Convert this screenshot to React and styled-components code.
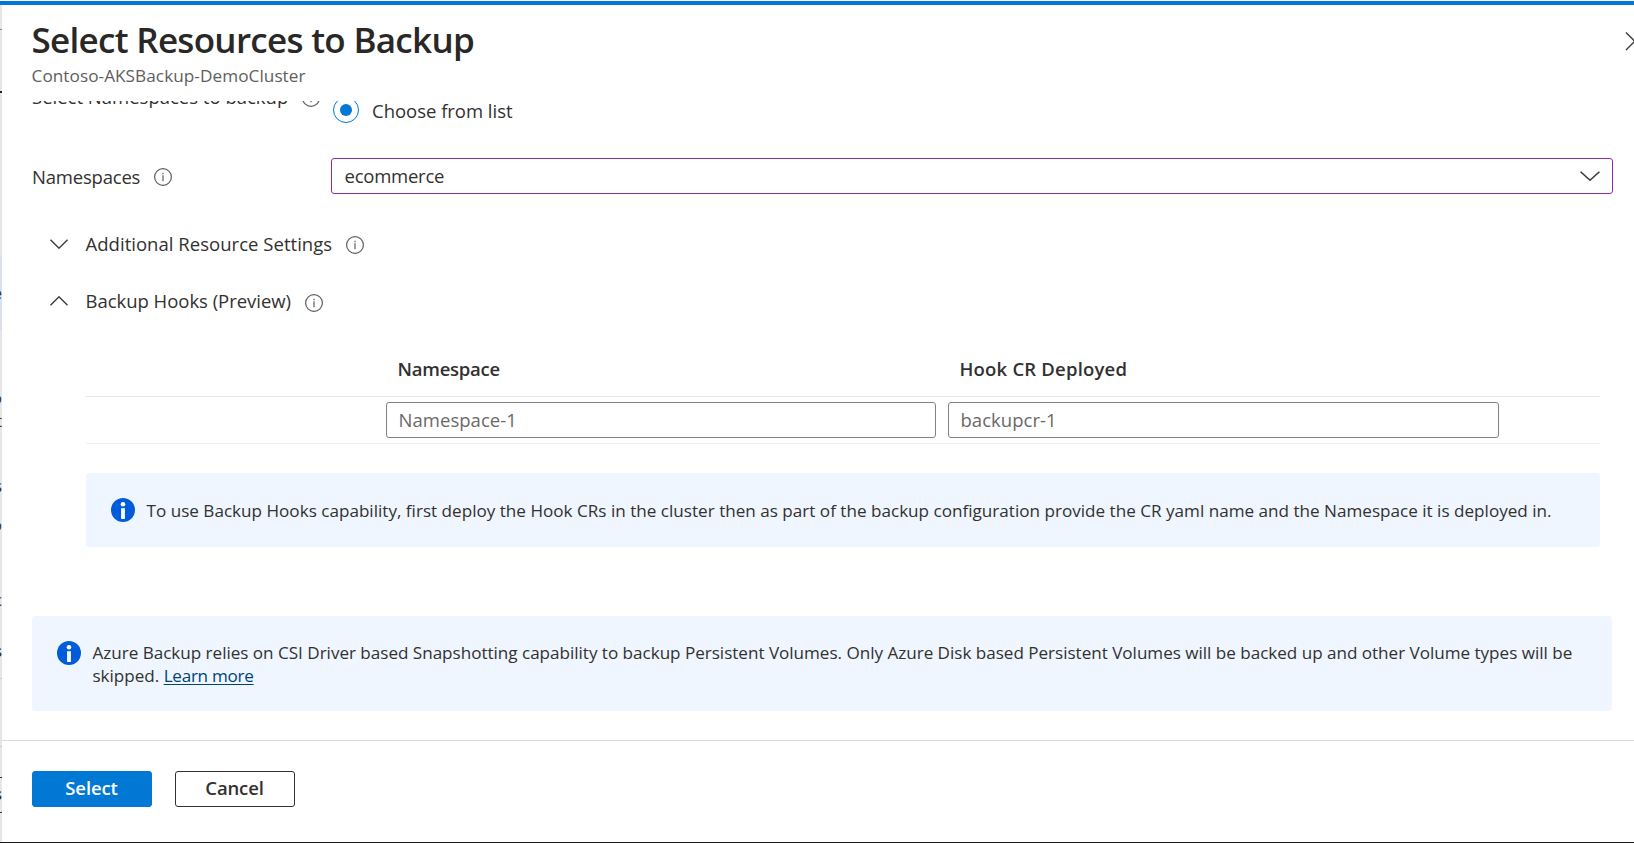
import React from "react";
import styled, { createGlobalStyle } from "styled-components";

const GlobalStyle = createGlobalStyle`
  * { box-sizing: border-box; }
  body {
    margin: 0;
    background: #fff;
    color: #323130;
    font-family: "Open Sans", "Noto Sans", sans-serif;
    font-size: 18.5px;
    line-height: 26px;
  }
`;

const Screen = styled.div`
  display: flex;
  flex-direction: column;
  height: 843px;
  overflow: hidden;
  border-bottom: 1px solid #1b1b1b;
`;

const TopBar = styled.div`
  flex: none;
  height: 5px;
  border-top: 1px solid #fff;
  background: #0078d4;
`;

const Workspace = styled.div`
  flex: 1;
  display: flex;
  min-height: 0;
`;

const Backdrop = styled.div`
  flex: none;
  display: flex;
  flex-direction: column;
  width: 2px;
  overflow: hidden;
  background: #e6e6e6;
`;

const Mark = styled.div`
  flex: none;
  height: ${(p) => p.$height}px;
  margin-top: ${(p) => p.$gap}px;
  background: ${(p) => p.$color || "transparent"};
`;

const Sliver = styled(Mark)`
  display: flex;
  justify-content: flex-end;
  overflow: hidden;
  font-size: 17px;
  font-weight: ${(p) => (p.$bold ? 600 : 400)};
  line-height: ${(p) => p.$height}px;
`;

const Panel = styled.main`
  flex: 1;
  display: flex;
  flex-direction: column;
  min-width: 0;
  background: #fff;
`;

const Header = styled.header`
  flex: none;
  display: flex;
  justify-content: space-between;
  height: 96px;
  padding: 15px 0 0 29.5px;
`;

const Title = styled.h1`
  margin: 0;
  color: #292827;
  font-size: 35px;
  font-weight: 600;
  line-height: 40px;
  letter-spacing: -0.7px;
`;

const Subtitle = styled.div`
  margin-top: 4px;
  color: #605e5c;
  font-size: 17.2px;
  line-height: 24px;
  letter-spacing: 0.05px;
`;

const CloseButton = styled.button`
  flex: none;
  display: flex;
  width: 9px;
  height: 20px;
  margin-top: 11px;
  padding: 0;
  border: 0;
  background: none;
  overflow: hidden;
`;

const Body = styled.div`
  flex: 1;
  min-height: 0;
  padding: 0 21px 0 30px;
  overflow: hidden;
`;

const Field = styled.div`
  display: flex;
  align-items: ${(p) => (p.$top ? "flex-start" : "center")};
  margin-top: ${(p) => p.$gap}px;
`;

const Label = styled.div`
  flex: none;
  display: flex;
  align-items: center;
  gap: 14px;
  width: 299px;
  white-space: nowrap;
`;

const Text = styled.span`
  padding-top: ${(p) => p.$drop || 0}px;
  letter-spacing: ${(p) => p.$track || 0}px;
`;

const RadioOption = styled.div`
  display: flex;
  align-items: center;
  gap: 13px;
  height: 39px;
  padding: 13px 0 0 2px;
`;

const RadioCircle = styled.span`
  display: flex;
  align-items: center;
  justify-content: center;
  width: 26px;
  height: 26px;
  border: 1px solid #0078d4;
  border-radius: 50%;

  &::after {
    content: "";
    width: 12px;
    height: 12px;
    border-radius: 50%;
    background: #0078d4;
  }
`;

const Dropdown = styled.div`
  flex: 1;
  display: flex;
  align-items: center;
  justify-content: space-between;
  height: 36px;
  padding: 0 12px 0 12.5px;
  border: 1px solid #8a2da5;
  border-radius: 3px;
`;

const Disclosure = styled.div`
  display: flex;
  align-items: center;
  height: 26px;
  margin: ${(p) => p.$gap}px 0 0 18px;
`;

const DisclosureTitle = styled.div`
  display: flex;
  align-items: center;
  gap: 14px;
  margin-left: 17.5px;
`;

const Section = styled.section`
  margin: 42px 13px 0 54px;
`;

const HookRow = styled.div`
  display: grid;
  grid-template-columns: 550px 551px;
  column-gap: 12px;
  padding: ${(p) => (p.$head ? "0 0 14px 300px" : "5px 0 5px 300px")};
  border-bottom: 1px solid ${(p) => (p.$head ? "#e6e6e6" : "#f0f0f0")};
`;

const ColumnTitle = styled.div`
  padding-left: 11.5px;
  font-weight: 600;
  letter-spacing: ${(p) => p.$track}px;
`;

const Input = styled.div`
  height: 36px;
  padding-left: 11.5px;
  border: 1px solid #858381;
  border-radius: 3px;
  color: #6b6967;
  line-height: 34px;
  letter-spacing: 0.04px;
`;

const Notice = styled.div`
  display: flex;
  gap: 11.5px;
  height: ${(p) => p.$height}px;
  margin: ${(p) => p.$gap}px ${(p) => p.$inset || 0}px 0 0;
  padding: 25px 30px 0 25px;
  border-radius: 3px;
  background: #eff6ff;
`;

const NoticeText = styled.div`
  padding-top: ${(p) => p.$drop || 0}px;
  font-size: 17.1px;
  line-height: 23px;
  letter-spacing: ${(p) => p.$track || 0}px;
`;

const Link = styled.a`
  display: inline-block;
  color: #004578;
  letter-spacing: -0.26px;
  text-decoration: underline;
  text-decoration-thickness: 1px;
  text-underline-offset: 2px;
`;

const Footer = styled.footer`
  flex: none;
  display: flex;
  gap: 23px;
  height: 102px;
  padding: 30px 0 0 30px;
  border-top: 1px solid #dcdcdc;
`;

const Button = styled.button`
  width: 120px;
  height: 36px;
  padding: 0 1px 2px 0;
  border: 1px solid ${(p) => (p.$primary ? "#0078d4" : "#323130")};
  border-radius: 3px;
  background: ${(p) => (p.$primary ? "#0078d4" : "#fff")};
  color: ${(p) => (p.$primary ? "#fff" : "#323130")};
  font: 600 18.5px/32px "Open Sans", "Noto Sans", sans-serif;
  letter-spacing: -0.13px;
`;

const Icon = styled.svg`
  flex: none;
  display: block;
  fill: none;
  stroke: #3b3a39;
  stroke-width: 1.4;
`;

const HintIcon = styled(Icon)`
  stroke: #605e5c;
  stroke-width: 1.2;
  margin-top: ${(p) => p.$drop || 0}px;
`;

const Hint = ({ drop }) => (
  <HintIcon width="18" height="18" viewBox="0 0 18 18" $drop={drop}>
    <circle cx="9" cy="9" r="8.4" />
    <path d="M9 7.3V13.3M9 4.7V6.2" />
  </HintIcon>
);

const Chevron = ({ up, size = 18 }) => (
  <Icon width={size} height="10" viewBox="0 0 18 10" preserveAspectRatio="none">
    <path d={up ? "M.5 9.2L9 .8L17.5 9.2" : "M.5 .8L9 9.2L17.5 .8"} />
  </Icon>
);

const NoticeIcon = () => (
  <Icon as="svg" width="24" height="24" viewBox="0 0 24 24">
    <circle cx="12" cy="12" r="12" fill="#015cda" stroke="none" />
    <circle cx="12" cy="6.2" r="2.3" fill="#fff" stroke="none" />
    <rect x="10.1" y="10.2" width="3.8" height="10.8" fill="#fff" stroke="none" />
  </Icon>
);

export default function App() {
  return (
    <Screen>
      <GlobalStyle />
      <TopBar />
      <Workspace>
        <Backdrop>
          <Mark $gap={24} $height={1} $color="#4a94d0" />
          <Mark $gap={61} $height={2} $color="#222" />
          <Mark $gap={163} $height={74} $color="#d9dfec">
            <Sliver $gap={26} $height={22}>e</Sliver>
          </Mark>
          <Sliver $gap={57} $height={22}>o</Sliver>
          <Sliver $gap={1} $height={22}>t</Sliver>
          <Sliver $gap={43} $height={22}>s</Sliver>
          <Sliver $gap={17} $height={22}>o</Sliver>
          <Sliver $gap={53} $height={22}>c</Sliver>
          <Sliver $gap={29} $height={22} $bold>s</Sliver>
          <Mark $gap={16} $height={1} $color="#ccc" />
          <Mark $gap={67} $height={1} $color="#ccc" />
          <Mark $gap={30} $height={1} $color="#333" />
          <Sliver $gap={5} $height={22} $bold>s</Sliver>
          <Mark $gap={7} $height={1} $color="#333" />
        </Backdrop>
        <Panel>
          <Header>
            <div>
              <Title>Select Resources to Backup</Title>
              <Subtitle>Contoso-AKSBackup-DemoCluster</Subtitle>
            </div>
            <CloseButton aria-label="Close">
              <Icon width="20" height="20" viewBox="0 0 20 20">
                <path d="M1 1.5L18.5 19M18.5 1.5L1 19" />
              </Icon>
            </CloseButton>
          </Header>
          <Body>
            <Field $top $gap={-17}>
              <Label>
                <Text>Select Namespaces to backup</Text>
                <Hint drop={1} />
              </Label>
              <RadioOption>
                <RadioCircle />
                <Text $drop={2} $track={-0.02}>Choose from list</Text>
              </RadioOption>
            </Field>
            <Field $gap={35}>
              <Label>
                <Text $drop={2} $track={-0.2}>Namespaces</Text>
                <Hint drop={1} />
              </Label>
              <Dropdown>
                <Text $track={-0.24}>ecommerce</Text>
                <Chevron size={20} />
              </Dropdown>
            </Field>
            <Disclosure $gap={37}>
              <Chevron />
              <DisclosureTitle>
                <Text $track={0.03}>Additional Resource Settings</Text>
                <Hint drop={1} />
              </DisclosureTitle>
            </Disclosure>
            <Disclosure $gap={31}>
              <Chevron up />
              <DisclosureTitle>
                <Text $track={-0.03}>Backup Hooks (Preview)</Text>
                <Hint drop={3} />
              </DisclosureTitle>
            </Disclosure>
            <Section>
              <HookRow $head>
                <ColumnTitle $track={-0.24}>Namespace</ColumnTitle>
                <ColumnTitle $track={0.2}>Hook CR Deployed</ColumnTitle>
              </HookRow>
              <HookRow>
                <Input>Namespace-1</Input>
                <Input>backupcr-1</Input>
              </HookRow>
              <Notice $gap={29} $height={74}>
                <NoticeIcon />
                <NoticeText $drop={1} $track={0.005}>
                  To use Backup Hooks capability, first deploy the Hook CRs in the cluster then as part of the
                  backup configuration provide the CR yaml name and the Namespace it is deployed in.
                </NoticeText>
              </Notice>
            </Section>
            <Notice $gap={69} $height={95} $inset={1}>
              <NoticeIcon />
              <NoticeText $track={-0.023}>
                Azure Backup relies on CSI Driver based Snapshotting capability to backup Persistent Volumes.
                Only Azure Disk based Persistent Volumes will be backed up and other Volume types will be
                skipped. <Link>Learn more</Link>
              </NoticeText>
            </Notice>
          </Body>
          <Footer>
            <Button $primary>Select</Button>
            <Button>Cancel</Button>
          </Footer>
        </Panel>
      </Workspace>
    </Screen>
  );
}
